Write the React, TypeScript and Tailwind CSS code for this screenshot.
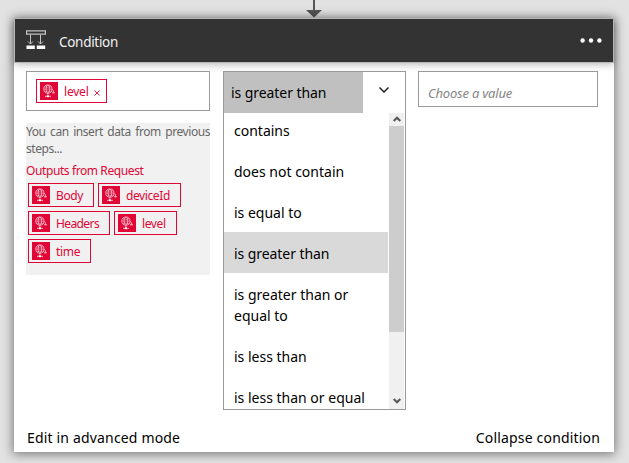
import React from 'react';

function RequestIcon() {
  return (
    <span className="block h-[18px] w-[18px] shrink-0 bg-[#e00636]">
      <svg viewBox="0 0 18 18" className="block h-full w-full" fill="none" stroke="#f9b4c3" strokeWidth="0.9">
        <circle cx="7.9" cy="7.1" r="4.1" />
        <ellipse cx="7.9" cy="7.1" rx="1.8" ry="4.1" />
        <path d="M3.8 7.1H12M4.5 5H11.3M4.5 9.3H11.3" strokeWidth="0.6" />
        <path d="M7.9 11.2V14M12 7.3Q13.8 8 13.6 10" />
        <path d="M12.2 10.7H14.8" strokeWidth="1.3" />
        <path d="M5 14.3H11" strokeWidth="1" />
        <path d="M6.9 14.3H9" stroke="#fff" strokeWidth="1.8" />
      </svg>
    </span>
  );
}

function Token({ label, className, removable }: { label: string; className: string; removable?: boolean }) {
  return (
    <div className={`flex h-6 shrink-0 items-center border border-[#e00636] pl-[3px] text-[12px] leading-[22px] text-[#e00636] ${className}`}>
      <RequestIcon />
      <span className="ml-1.5 pt-0.5 whitespace-nowrap">{label}</span>
      {removable && (
        <svg viewBox="0 0 6 6" className="mt-[3px] ml-[5px] h-1.5 w-1.5" stroke="#e00636" strokeWidth="0.9">
          <path d="M.5 .5l5 5M5.5 .5l-5 5" />
        </svg>
      )}
    </div>
  );
}

const options = [
  'contains',
  'does not contain',
  'is equal to',
  'is greater than',
  'is greater than or equal to',
  'is less than',
  'is less than or equal',
];

export default function App() {
  return (
    <div className="flex h-[463px] w-[629px] flex-col overflow-hidden bg-[#e2e2e2] font-['Noto_Sans','Open_Sans',sans-serif] text-[14px] text-black">
      <div className="flex h-[18px] shrink-0 pl-[305px]">
        <svg viewBox="0 0 18 18" className="h-[18px] w-[18px]" fill="#555">
          <path d="M8 0H10V10H17L9 17.5L1 10H8Z" />
        </svg>
      </div>
      <div className="ml-[14px] flex h-[434px] w-[600px] shrink-0 flex-col bg-white shadow-[0_1px_10px_1px_rgba(0,0,0,0.48)]">
        <header className="flex h-[45px] shrink-0 items-center border border-[#b5b5b5] bg-[#333] shadow-[0_2px_7px_rgba(0,0,0,0.25)]">
          <svg viewBox="0 0 20 20" className="mb-[1px] ml-[11px] h-5 w-5" fill="none" stroke="#c4c4c4" strokeWidth="1">
            <path d="M.6 .9H19.4V4.1H.6Z" strokeWidth="1.2" />
            <path d="M4.5 4.7V14M14.5 4.7V14M2 11.5L4.5 14L7 11.5M12 11.5L14.5 14L17 11.5" />
            <path d="M.5 15.5H8.8V19H.5ZM10.8 15.5H19.2V19H10.8Z" fill="#fff" stroke="none" />
          </svg>
          <span className="ml-[13px] pt-[3px] text-[13.5px] tracking-[-0.3px] text-[#f2f2f2]">Condition</span>
          <svg viewBox="0 0 22 5" className="mr-[11px] ml-auto h-[5px] w-[22px]" fill="#fff">
            <circle cx="2.6" cy="2.5" r="2.2" /><circle cx="11" cy="2.5" r="2.2" /><circle cx="19.4" cy="2.5" r="2.2" />
          </svg>
        </header>
        <main className="flex h-[347px] shrink-0 items-start pt-2 pl-3">
          <section className="w-[184px]">
            <div className="h-10 border border-[#999] pt-[7px] pl-[9px]">
              <Token label="level" removable className="w-[71px] tracking-[-0.2px]" />
            </div>
            <div className="mt-3 h-[152px] bg-[#f1f1f1] text-[12px]">
              <p className="text-justify leading-[17px] tracking-[-0.45px] text-[#666]">You can insert data from previous steps...</p>
              <p className="pt-[5px] leading-[18px] tracking-[-0.4px] text-[#e00636]">Outputs from Request</p>
              <div className="mt-[3px] flex flex-wrap gap-1 pl-0.5">
                <Token label="Body" className="w-[66px] tracking-[-0.4px]" />
                <Token label="deviceId" className="w-[83px] tracking-[-0.4px]" />
                <Token label="Headers" className="w-[82px] tracking-[-0.6px]" />
                <Token label="level" className="w-[63px] tracking-[-0.4px]" />
                <Token label="time" className="w-[63px] tracking-[-0.3px]" />
              </div>
            </div>
          </section>
          <section className="ml-[13px] flex h-[339px] w-[183px] flex-col border border-[#999]">
            <div className="flex h-[41px] shrink-0">
              <div className="w-[139px] bg-[#c0c0c0] pl-[7px] leading-[42px] tracking-[-0.07px] whitespace-nowrap">is greater than</div>
              <svg viewBox="0 0 10 6" className="mt-[15px] ml-4 h-1.5 w-2.5" fill="none" stroke="#222" strokeWidth="1.5">
                <path d="M.5 .5L5 5L9.5 .5" />
              </svg>
            </div>
            <div className="flex min-h-0 flex-1">
              <ul className="-mt-1 w-[164px] overflow-hidden">
                {options.map((label) => (
                  <li key={label} className={`pt-[11px] pr-3 pb-[9px] pl-[10px] leading-[21px] ${label === 'is greater than' ? 'bg-[#d9d9d9] tracking-[-0.07px]' : ''}`}>
                    {label}
                  </li>
                ))}
              </ul>
              <div className="ml-px flex w-[15px] flex-col items-center bg-[#f0f0f0]">
                <svg viewBox="0 0 8 6" className="mt-[3px] h-1.5 w-2 shrink-0" fill="none" stroke="#555" strokeWidth="2"><path d="M.7 5L4 1.7L7.3 5" /></svg>
                <div className="mt-1 h-[206px] w-full bg-[#cdcdcd]" />
                <svg viewBox="0 0 8 6" className="mt-auto mb-[5px] h-1.5 w-2 shrink-0" fill="none" stroke="#555" strokeWidth="2"><path d="M.7 1L4 4.3L7.3 1" /></svg>
              </div>
            </div>
          </section>
          <div className="ml-3 h-9 w-[180px] border border-[#999] pt-[4px] pl-[9px] text-[13px] leading-[34px] tracking-[-0.2px] text-[#858585] italic">Choose a value</div>
        </main>
        <footer className="flex justify-between pt-[17px] pr-[14px] pl-[13px] leading-[21px] tracking-[0.17px]">
          <span>Edit in advanced mode</span>
          <span>Collapse condition</span>
        </footer>
      </div>
    </div>
  );
}
